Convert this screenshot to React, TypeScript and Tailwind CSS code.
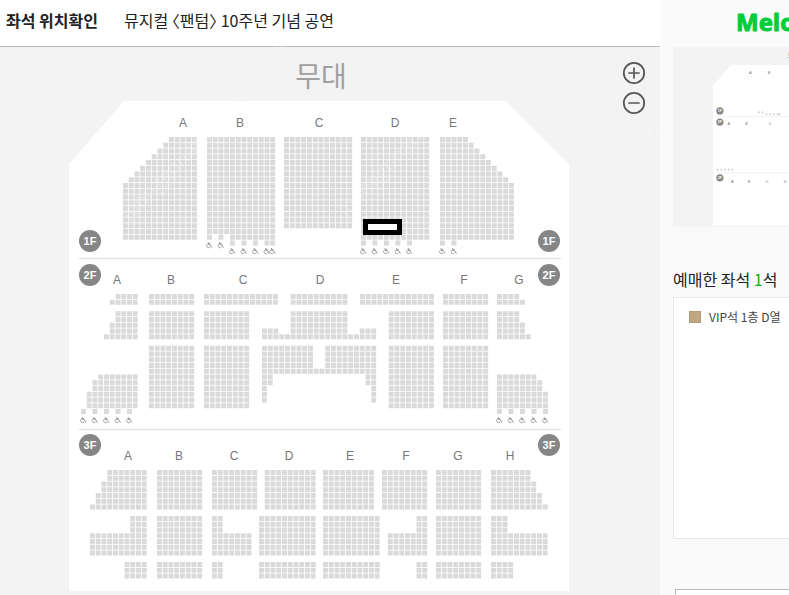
import { useId } from "react";

// distance between two seats on the plan
const PITCH = 5.75;

type Section = {
  name: string;
  labelX: number;
  x: number;
  // one entry per row group: "columns*repeat", "" is an aisle row
  rows: string[];
  wheelchairs?: { y: number; cols: number[] }[];
};

type Floor = {
  name: string;
  badgeY: number;
  labelY: number;
  y: number;
  sections: Section[];
};

const floors: Floor[] = [
  {
    name: "1F",
    badgeY: 241,
    labelY: 127,
    y: 137,
    sections: [
      {
        name: "A",
        labelX: 183,
        x: 123,
        rows: ["8-12", "7-12", "6-12", "5-12", "4-12", "3-12", "2-12", "1-12", "0-12*10"],
      },
      {
        name: "B",
        labelX: 240,
        x: 207,
        rows: ["0-11*17", "0,2,4-11", "4,6,8,10,11"],
        wheelchairs: [
          { y: 245, cols: [0, 2] },
          { y: 251, cols: [4, 6, 8, 10, 11] },
        ],
      },
      { name: "C", labelX: 319, x: 284, rows: ["0-11*16"] },
      {
        name: "D",
        labelX: 395,
        x: 361,
        rows: ["0-11*18", "0,2,4,6,8"],
        wheelchairs: [{ y: 251, cols: [0, 2, 4, 6, 8] }],
      },
      {
        name: "E",
        labelX: 453,
        x: 440,
        rows: ["0-4", "0-5", "0-6", "0-7", "0-8", "0-9", "0-10", "0-11", "0-12*10", "0,2"],
        wheelchairs: [{ y: 251, cols: [0, 2] }],
      },
    ],
  },
  {
    name: "2F",
    badgeY: 275,
    labelY: 284,
    y: 294,
    sections: [
      {
        name: "A",
        labelX: 117,
        x: 81,
        rows: ["6-9", "5-9", "", "6-9*2", "5-9*2", "4-9", "*6", "3-9", "2-9*2", "1-9*3", "0,2,4,6,8"],
        wheelchairs: [{ y: 420, cols: [0, 2, 4, 6, 8] }],
      },
      { name: "B", labelX: 171, x: 149, rows: ["0-7*2", "", "0-7*5", "", "0-7*11"] },
      { name: "C", labelX: 243, x: 204, rows: ["0-12*2", "", "0-7*5", "", "0-7*11"] },
      {
        name: "D",
        labelX: 320,
        x: 262,
        rows: [
          "5-14*2",
          "",
          "5-14*3",
          "0-2,5-14,17-19",
          "0-19",
          "",
          "0-8,11-19*4",
          "0-19",
          "0,1,18,19*2",
          "0,19*3",
        ],
      },
      { name: "E", labelX: 396, x: 360, rows: ["0-12*2", "", "5-12*5", "", "5-12*11"] },
      { name: "F", labelX: 464, x: 443, rows: ["0-7*2", "", "0-7*5", "", "0-7*11"] },
      {
        name: "G",
        labelX: 519,
        x: 497,
        rows: ["0-3", "0-4", "", "0-3*2", "0-4*2", "0-5", "*6", "0-6", "0-7*2", "0-8*3", "0,2,4,6,8"],
        wheelchairs: [{ y: 420, cols: [0, 2, 4, 6, 8] }],
      },
    ],
  },
  {
    name: "3F",
    badgeY: 445,
    labelY: 460,
    y: 470,
    sections: [
      {
        name: "A",
        labelX: 128,
        x: 90,
        rows: ["3-9*2", "2-9*2", "1-9*2", "0-9", "", "7-9*3", "0-9*4", "", "6-9*3"],
      },
      { name: "B", labelX: 179, x: 157, rows: ["0-7*7", "", "0-7*7", "", "0-7*3"] },
      { name: "C", labelX: 234, x: 212, rows: ["0-7*7", "", "0,1*3", "0-6*4", "", "0,1*3"] },
      { name: "D", labelX: 289, x: 259, rows: ["1-9*7", "", "0-9*7", "", "0-9*3"] },
      { name: "E", labelX: 350, x: 323, rows: ["0-8*7", "", "0-9*7", "", "0-9*3"] },
      { name: "F", labelX: 406, x: 382, rows: ["0-7*7", "", "6-7*3", "1-7*4", "", "6-7*3"] },
      { name: "G", labelX: 458, x: 436, rows: ["0-7*7", "", "0-7*7", "", "0-7*3"] },
      {
        name: "H",
        labelX: 510,
        x: 491,
        rows: ["0-6*2", "0-7*2", "0-8*2", "0-9", "", "0-2*3", "0-9*4", "", "0-3*3"],
      },
    ],
  },
];

function parseCols(cols: string) {
  if (!cols) return [];
  return cols.split(",").flatMap((part) => {
    const [from, to = from] = part.split("-").map(Number);
    return Array.from({ length: to - from + 1 }, (_, i) => from + i);
  });
}

function seatPath(section: Section, top: number) {
  let row = 0;
  let d = "";
  for (const group of section.rows) {
    const [cols, repeat = "1"] = group.split("*");
    for (let i = 0; i < Number(repeat); i++) {
      for (const col of parseCols(cols)) {
        d += `M${section.x + col * PITCH} ${top + row * PITCH}h4.9v4.9h-4.9z`;
      }
      row++;
    }
  }
  return d;
}

function SeatMap({ showSeats = true, className }: { showSeats?: boolean; className?: string }) {
  const chairId = useId();

  return (
    <svg viewBox="69 47 500 544" className={className} role="img" aria-label="좌석 배치도">
      <defs>
        <g id={chairId} fill="none" stroke="#8a8a8a" strokeWidth="0.8">
          <path d="M-0.8 -3v2.6h2.2l1 2.6h0.8M-0.8 -1.6h2" />
          <path d="M-1.6 -0.8a1.9 1.9 0 1 0 2.8 2.4" />
        </g>
      </defs>

      <text
        x="321"
        y="87"
        textAnchor="middle"
        className="fill-[#a0a0a0] font-['Noto_Sans_CJK_KR',sans-serif] text-[28px] font-normal"
      >
        무대
      </text>
      <path d="M124 101H506L569 164V591H69V164Z" fill="#fff" />
      <path d="M79 258.500H561M79 429.500H561" stroke="#e2e2e2" strokeWidth="1.500" />

      {floors.map((floor) => (
        <g key={floor.name}>
          {[90, 549].map((cx) => (
            <g key={cx}>
              <circle cx={cx} cy={floor.badgeY} r="11" fill="#868686" />
              <text
                x={cx}
                y={floor.badgeY + 4}
                textAnchor="middle"
                className="fill-white font-['Liberation_Sans',sans-serif] text-[11px] font-bold"
              >
                {floor.name}
              </text>
            </g>
          ))}

          {floor.sections.map((section) => (
            <g key={section.name}>
              <text
                x={section.labelX}
                y={floor.labelY}
                textAnchor="middle"
                className="fill-[#777] font-['Liberation_Sans',sans-serif] text-[12px]"
              >
                {section.name}
              </text>
              {showSeats && <path d={seatPath(section, floor.y)} fill="#dadada" />}
              {section.wheelchairs?.map((line) =>
                line.cols.map((col) => (
                  <use
                    key={`${line.y}-${col}`}
                    href={`#${chairId}`}
                    x={section.x + col * PITCH + 2}
                    y={line.y}
                  />
                ))
              )}
            </g>
          ))}
        </g>
      ))}

      {/* booked seats */}
      {showSeats && (
        <rect x="365.500" y="221.500" width="34" height="11" fill="#fff" stroke="#000" strokeWidth="5" />
      )}
    </svg>
  );
}

function ZoomButton({ label, plus }: { label: string; plus?: boolean }) {
  return (
    <button type="button" aria-label={label} className="block size-6 cursor-pointer">
      <svg viewBox="0 0 24 24" className="size-6" fill="none" stroke="#555" strokeLinecap="round">
        <circle cx="12" cy="12" r="10.200" strokeWidth="1.800" />
        <path d={plus ? "M7 12h10M12 7v10" : "M7 12h10"} strokeWidth="1.700" />
      </svg>
    </button>
  );
}

function Watermark() {
  const spots = [
    [206, 134],
    [584, 212],
    [130, 222],
    [346, 218],
  ];

  return (
    <svg aria-hidden="true" className="pointer-events-none absolute inset-0 size-full">
      {spots.map(([x, y]) => (
        <text
          key={x}
          transform={`translate(${x} ${y}) rotate(-46)`}
          className="fill-white/25 font-['Open_Sans',sans-serif] text-[20px]"
        >
          joonggonara
        </text>
      ))}
    </svg>
  );
}

export default function App() {
  return (
    <div className="relative flex h-screen overflow-hidden bg-[#fafafa] font-['Noto_Sans_CJK_KR',sans-serif] text-[#222]">
      {/* Seat map */}
      <main className="flex min-w-[660px] flex-1 flex-col bg-[#f3f3f3]">
        <header className="flex h-[47px] shrink-0 items-center gap-[26px] border-b border-[#bbb] bg-white px-1.5 pb-1.5">
          <h1 className="text-[16px] font-bold">좌석 위치확인</h1>
          <p className="text-[16px] [font-feature-settings:'halt']">
            뮤지컬 〈팬텀〉 10주년 기념 공연
          </p>
        </header>

        <section className="relative flex flex-1 justify-center pr-[22px]">
          <SeatMap className="h-[544px] w-[500px] shrink-0" />
          <div className="absolute top-3.5 right-3.5 flex flex-col gap-1.5">
            <ZoomButton label="확대" plus />
            <ZoomButton label="축소" />
          </div>
        </section>
      </main>

      {/* Booking info */}
      <aside className="w-[270px] shrink-0 px-[13px]">
        <div className="flex h-[47px] items-center pl-16">
          <svg role="img" aria-label="Melon" className="h-8 w-24 overflow-visible">
            <text
              x="-1"
              y="23"
              strokeWidth="1"
              strokeLinejoin="round"
              className="fill-[#00cd3c] stroke-[#00cd3c] font-['Open_Sans',sans-serif] text-[24px] font-bold"
            >
              Melon
            </text>
          </svg>
        </div>

        <div className="flex h-[180px] justify-center bg-[#f3f3f3]">
          <SeatMap showSeats={false} className="h-[179px] w-[164px]" />
        </div>

        <h2 className="mt-10 mb-1.5 text-[16px] leading-6">
          예매한 좌석 <span className="text-[#00b523]">1</span>석
        </h2>
        <ul className="h-[242px] border border-[#e8e8e8] bg-white px-[15px] py-2.5">
          <li className="flex items-center gap-2 text-[12px] leading-[18px] text-[#444]">
            <span className="size-3 border border-[#b39b75] bg-[#bfa782]" />
            VIP석 1층 D열
          </li>
        </ul>

        <button
          type="button"
          aria-label="닫기"
          className="mt-[50px] ml-0.5 block h-10 w-full border border-[#bbb] bg-white"
        />
      </aside>

      <Watermark />
    </div>
  );
}
